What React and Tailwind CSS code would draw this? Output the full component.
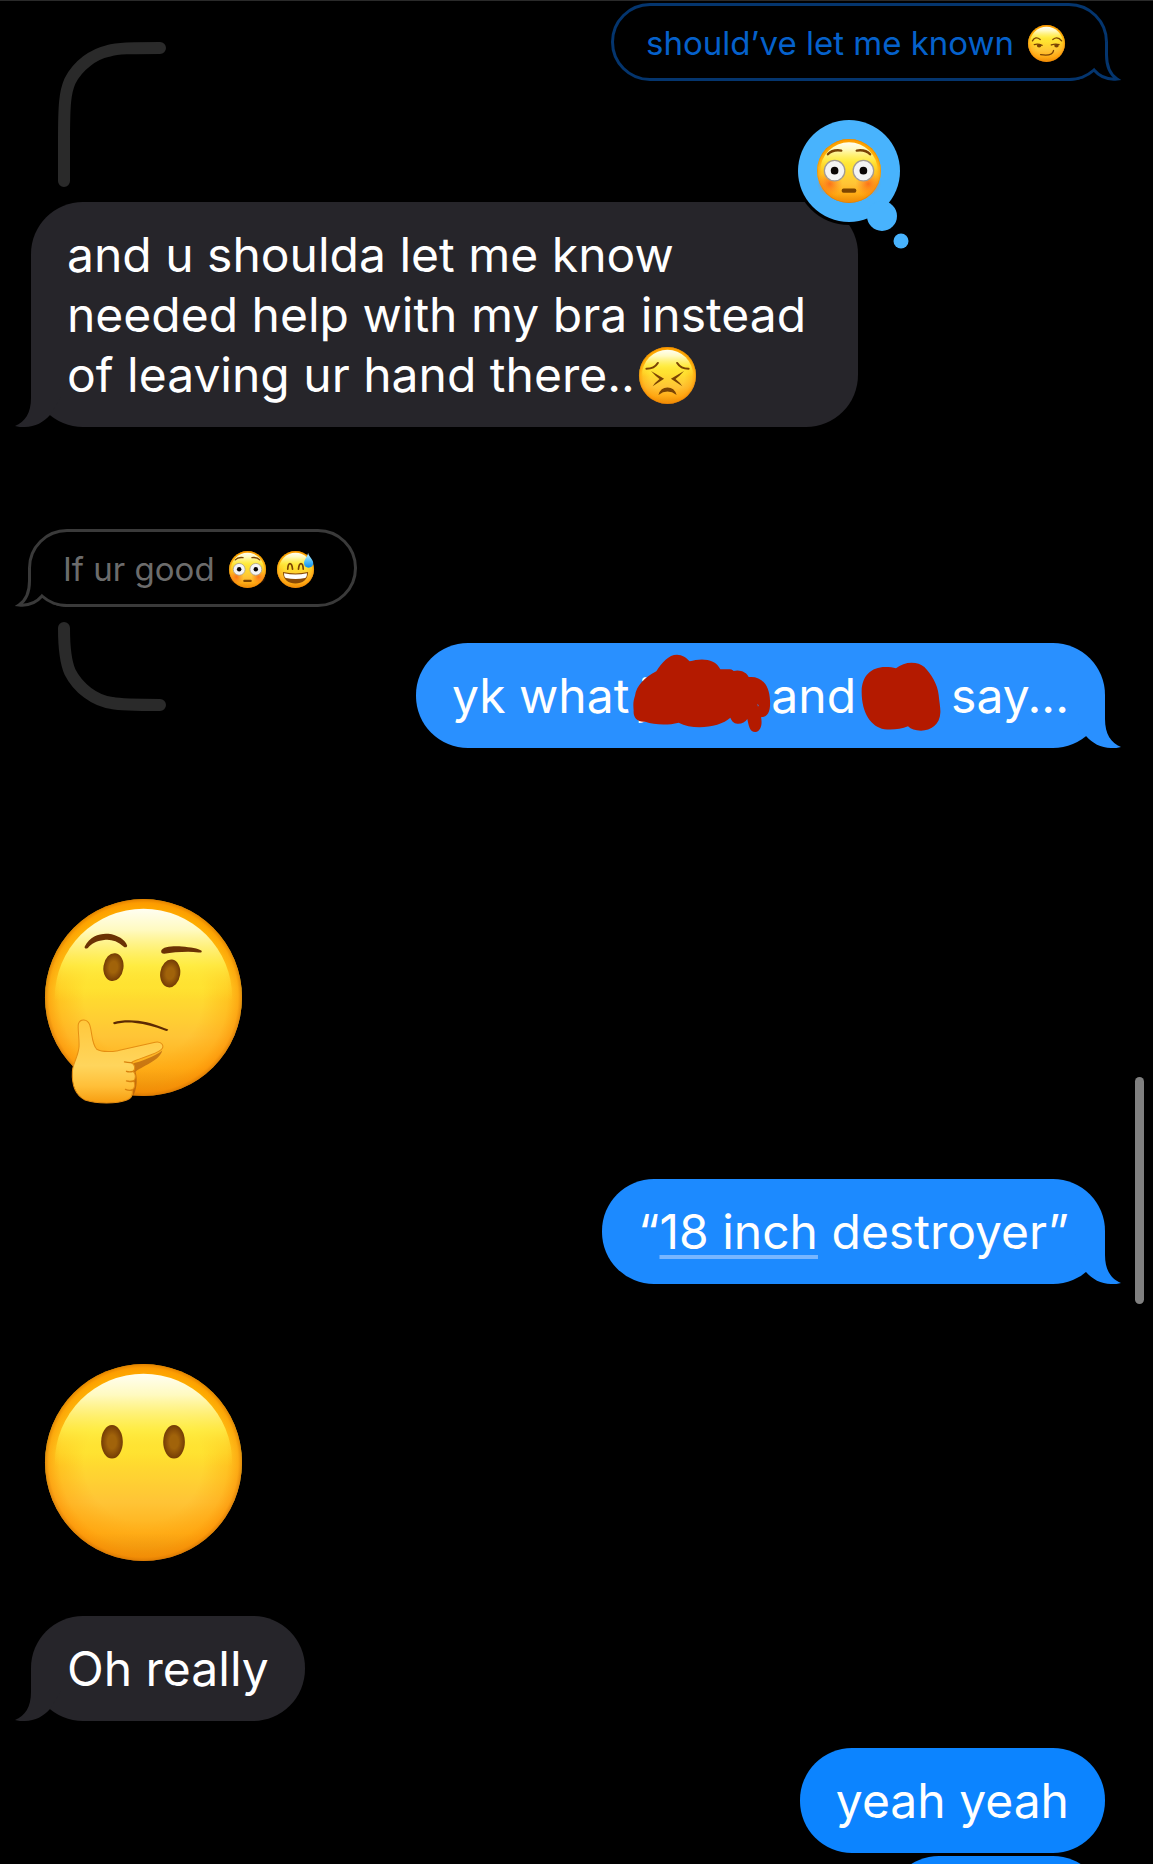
import React from 'react';

const EmojiDefs = () => (
  <svg className="absolute h-0 w-0" aria-hidden="true">
    <defs>
      <linearGradient id="face" x1="0" y1="0" x2="0" y2="1">
        <stop offset="0" stopColor="#ffae00" />
        <stop offset="0.12" stopColor="#ffc400" />
        <stop offset="0.45" stopColor="#ffe02e" />
        <stop offset="0.7" stopColor="#ffc436" />
        <stop offset="0.86" stopColor="#ffb01a" />
        <stop offset="1" stopColor="#e08a0e" />
      </linearGradient>
      <radialGradient id="rim">
        <stop offset="0.6" stopColor="#ff9500" stopOpacity="0" />
        <stop offset="0.85" stopColor="#ff9500" stopOpacity="0.3" />
        <stop offset="0.96" stopColor="#fb8c00" stopOpacity="0.6" />
        <stop offset="1" stopColor="#d87400" stopOpacity="0.8" />
      </radialGradient>
      <linearGradient id="shine" x1="0" y1="0" x2="0" y2="1">
        <stop offset="0" stopColor="#fffef2" />
        <stop offset="0.12" stopColor="#fffac0" />
        <stop offset="0.32" stopColor="#fff34e" stopOpacity="0.75" />
        <stop offset="0.52" stopColor="#ffe22e" stopOpacity="0" />
      </linearGradient>
      <radialGradient id="eye">
        <stop offset="0.4" stopColor="#a1630a" />
        <stop offset="1" stopColor="#743c05" />
      </radialGradient>
      <radialGradient id="blush">
        <stop offset="0" stopColor="#fb5a14" stopOpacity="0.75" />
        <stop offset="1" stopColor="#fb7a14" stopOpacity="0" />
      </radialGradient>
      <linearGradient id="hand" x1="0" y1="0" x2="0" y2="1">
        <stop offset="0" stopColor="#ffc83c" />
        <stop offset="0.55" stopColor="#ffd55c" />
        <stop offset="0.8" stopColor="#ffbf38" />
        <stop offset="1" stopColor="#f79d10" />
      </linearGradient>
      <linearGradient id="drop" x1="0" y1="0" x2="0" y2="1">
        <stop offset="0" stopColor="#d8f4ff" />
        <stop offset="0.5" stopColor="#5cc6fb" />
        <stop offset="1" stopColor="#0a8df0" />
      </linearGradient>
    </defs>
  </svg>
);

const Emoji = ({ label, className, children }) => (
  <svg viewBox="0 0 100 100" role="img" aria-label={label} className={`overflow-visible ${className}`}>
    <circle cx="50" cy="50" r="50" fill="url(#face)" />
    <circle cx="50" cy="50" r="50" fill="url(#rim)" />
    <ellipse cx="50" cy="50" rx="45" ry="45" fill="url(#shine)" />
    {children}
  </svg>
);

const Flushed = ({ className }) => (
  <Emoji label="flushed face" className={className}>
    <circle cx="20" cy="70" r="20" fill="url(#blush)" />
    <circle cx="80" cy="70" r="20" fill="url(#blush)" />
    <g fill="#f4f4f4" stroke="#a39b93" strokeWidth="2">
      <circle cx="27.5" cy="49.5" r="16" />
      <circle cx="72.5" cy="49.5" r="16" />
    </g>
    <circle cx="27.5" cy="49.5" r="6" fill="#0a0604" />
    <circle cx="72.5" cy="49.5" r="6" fill="#0a0604" />
    <path d="M17 24Q24 16 38 18M83 24Q76 16 62 18" fill="none" stroke="#7a4304" strokeWidth="3.6" strokeLinecap="round" />
    <rect x="38.5" y="77.5" width="23" height="6.5" rx="3" fill="#7d4500" />
  </Emoji>
);

const Smirk = ({ className }) => (
  <Emoji label="smirking face" className={className}>
    <g fill="none" stroke="#7a4304" strokeWidth="3.6" strokeLinecap="round">
      <path d="M12 43Q20 29 33 39M67 39Q80 29 91 43" />
      <path d="M17 53Q27 50 38 55M63 54Q74 50 84 53" />
      <path d="M34 80Q66 85 69 69" />
    </g>
    <ellipse cx="30" cy="56" rx="6" ry="4.5" fill="#7a4304" />
    <ellipse cx="77" cy="56" rx="6" ry="4.5" fill="#7a4304" />
  </Emoji>
);

const SweatGrin = ({ className }) => (
  <Emoji label="grinning face with sweat" className={className}>
    <path d="M29 49C30 29 40 29 42 49M58 49C60 29 70 29 71 49" fill="none" stroke="#7a4304" strokeWidth="4.5" strokeLinecap="round" />
    <path d="M16 57Q50 65 84 57C84 78 68 88 50 88C32 88 16 78 16 57Z" fill="#8a4a06" />
    <path d="M19 60Q50 67 81 60C81 68 79 71 76 73Q50 78 24 73C21 71 19 68 19 60Z" fill="#fff" />
    <path d="M84 5C86 16 98 23 98 33C98 40 92 45 85 45C78 45 73 40 73 33C73 23 82 17 84 5Z" fill="url(#drop)" />
  </Emoji>
);

const Persevere = ({ className }) => (
  <Emoji label="persevering face" className={className}>
    <path d="M13 38Q27 38 33 28M87 38Q73 38 67 28" fill="none" stroke="#7a4304" strokeWidth="3.6" strokeLinecap="round" />
    <path d="M21 42L44 55.5L24 69Q28 62 36 56Q29 51 21 42ZM79 42L56 55.5L76 69Q72 62 64 56Q71 51 79 42Z" fill="#7a4304" />
    <path d="M34 84Q38 71 50 71Q62 71 66 84Q58 78 50 78Q42 78 34 84Z" fill="#7a4304" />
  </Emoji>
);

const Thinking = ({ className }) => (
  <Emoji label="thinking face" className={className}>
    <g transform="scale(.1695) translate(-45 -58)">
      <ellipse cx="250" cy="262" rx="30" ry="42" fill="url(#eye)" transform="rotate(8 250 262)" />
      <ellipse cx="420" cy="281" rx="30" ry="42" fill="url(#eye)" transform="rotate(8 420 281)" />
      <path d="M164 200C180 168 210 160 235 162C262 165 285 180 291 197C291 204 284 204 280 200C262 184 240 178 222 181C198 184 184 192 174 204C168 209 162 206 164 200Z" fill="#6b3204" />
      <path d="M393 213C396 200 430 198 455 200C480 202 505 206 514 213C516 219 510 219 505 218C470 214 430 218 402 222C395 222 392 218 393 213Z" fill="#6b3204" />
      <path d="M250 427C280 418 320 420 350 427C375 433 400 443 414 449C412 455 408 453 402 451C375 440 345 432 315 429C290 427 270 429 254 433C249 433 249 429 250 427Z" fill="#5c2a03" />
      <path d="M305 552C330 545 375 530 396 512C390 540 345 555 316 575C324 600 318 635 308 648Z" fill="#a5520b" opacity=".6" />
      <path
        d="M127 575C128 550 145 530 147 500C148 470 142 445 145 432C150 416 172 416 179 435C187 460 184 490 200 508C220 519 245 515 265 512L375 487C395 483 405 500 392 510C375 525 325 535 303 548C316 554 316 568 309 574C318 582 317 598 310 603C317 612 314 624 306 630C309 645 303 655 290 660C260 672 200 672 165 660C135 645 125 610 127 575Z"
        fill="url(#hand)"
        stroke="#e58e12"
        strokeWidth="3"
      />
      <path d="M283 546Q296 549 306 548M289 574Q298 577 309 574M289 603Q299 606 310 603M286 628Q297 633 306 630" fill="none" stroke="#d9820e" strokeWidth="4" strokeLinecap="round" />
    </g>
  </Emoji>
);

const NoMouth = ({ className }) => (
  <Emoji label="face without mouth" className={className}>
    <ellipse cx="34" cy="39.5" rx="5.5" ry="8.5" fill="url(#eye)" />
    <ellipse cx="65.5" cy="39.5" rx="5.5" ry="8.5" fill="url(#eye)" />
  </Emoji>
);

const Tail = ({ sent }) => (
  <svg
    viewBox="-16 -55 46 55"
    className={`absolute bottom-0 h-[55px] w-[46px] fill-current ${sent ? '-right-4 -scale-x-100' : '-left-4'}`}
    aria-hidden="true"
  >
    <path d="M0 -53V-29C0 -14 -6 -5 -16 -1C-13 0 -10 0 -6 0C4 0 13 -5 19 -12L30 -30V-53Z" />
  </svg>
);

const Reaction = () => (
  <div className="absolute -top-[85px] -right-[53px] h-[134px] w-[116px]">
    <svg viewBox="0 0 116 134" className="absolute inset-0" aria-hidden="true">
      <circle cx="54" cy="54" r="54" fill="#000" />
      <g fill="#48b3fd">
        <circle cx="54" cy="54" r="51" />
        <circle cx="87" cy="99" r="15" />
        <circle cx="106" cy="124" r="7.5" />
      </g>
    </svg>
    <Flushed className="relative m-[22px] h-16 w-16" />
  </div>
);

// color is set through text-* so the tail can pick it up with currentColor
const Bubble = ({ sent, tail = true, reaction, color, children }) => (
  <div className={`relative ${color} ${sent ? 'self-end' : 'max-w-[77%] self-start'}`}>
    <div className="rounded-[52px] bg-current px-9 pt-[23px] pb-[22px]">
      <p className="text-[48px] leading-[60px] text-white">{children}</p>
    </div>
    {tail && <Tail sent={sent} />}
    {reaction && <Reaction />}
  </div>
);

const GhostBubble = ({ sent, className, children }) => (
  <div
    className={`relative rounded-full border-[3px] pt-4 pr-10 pb-[14px] pl-8 text-[33px] leading-[42px] ${
      sent ? '-mr-[3px] border-[#04356e] text-[#0561cb]' : '-ml-[3px] self-start border-[#3a3a3a] text-[#6c6c6c]'
    } ${className || ''}`}
  >
    <svg
      viewBox="-14 -42 54 42"
      className={`absolute -bottom-[3px] h-[42px] w-[54px] ${
        sent ? '-right-[17px] -scale-x-100 stroke-[#04356e]' : '-left-[17px] stroke-[#3a3a3a]'
      }`}
      aria-hidden="true"
    >
      <path d="M1 -39L39 -39V-3L1 -3Z" fill="#000" stroke="none" />
      <path
        d="M1.5 -39.5V-26C1.5 -14 -3 -6 -9 -2C1 -1 8 -4 14 -11A37.5 37.5 0 0 0 40 -1.5"
        fill="#000"
        strokeWidth="3"
      />
    </svg>
    <p className="relative flex items-center">{children}</p>
  </div>
);

const ThreadLine = ({ bottom }) =>
  bottom ? (
    <svg viewBox="58 622 108 89" className="ml-[27px] h-[89px] w-[108px]" aria-hidden="true">
      <path d="M64 628C64 650 66 663 70 672C78 688 95 701 112 703C122 705 135 705 160 705" fill="none" stroke="#2a2a2a" strokeWidth="12" strokeLinecap="round" />
    </svg>
  ) : (
    <svg viewBox="58 42 108 145" className="mt-[39px] ml-[27px] h-[145px] w-[108px]" aria-hidden="true">
      <path d="M64 181V140C64 105 65 92 70 81C78 65 94 54 108 51C118 48 130 48 160 48" fill="none" stroke="#2a2a2a" strokeWidth="12" strokeLinecap="round" />
    </svg>
  );

export default function App() {
  return (
    <main className="relative flex h-screen flex-col overflow-hidden border-t border-[#2a2a2a] bg-black pt-[2px] pr-12 pl-[31px] font-['Inter',sans-serif]">
      <EmojiDefs />

      {/* Replied-to messages are outlined, with the thread line on the left */}
      <div className="flex shrink-0 items-start justify-between">
        <ThreadLine />
        <GhostBubble sent>
          should’ve let me known
          <Smirk className="ml-[14px] h-[37px] w-[37px]" />
        </GhostBubble>
      </div>

      <div className="mt-[15px] flex shrink-0 flex-col">
        <Bubble reaction color="text-[#26252a]">
          and u shoulda let me know needed help with my bra instead of leaving ur hand there..
          <Persevere className="-mt-[6px] ml-1 inline-block h-[57px] w-[57px]" />
        </Bubble>
      </div>

      <GhostBubble className="mt-[102px] shrink-0">
        If ur good
        <Flushed className="ml-[14px] h-[37px] w-[37px]" />
        <SweatGrin className="ml-[11px] h-[37px] w-[37px]" />
      </GhostBubble>

      <div className="mt-[15px] flex shrink-0 items-start justify-between">
        <ThreadLine bottom />
        <div className="mt-[21px] flex">
          <Bubble sent color="text-[#2990ff]">
            yk what
            <span className="relative ml-1 inline-block w-[138px] pl-[6px]">
              j
              <svg viewBox="698 100 414 237" className="absolute -top-3 left-0 h-[79px] w-[138px]" aria-hidden="true">
                <path
                  d="M704 225C708 195 735 168 768 152C785 125 805 102 830 102C845 102 860 112 868 122C900 112 945 112 960 146C980 146 995 143 1000 151C1018 145 1040 155 1045 169C1085 165 1108 195 1109 240C1111 270 1103 290 1082 290C1086 305 1084 332 1065 334C1048 334 1045 315 1041 295C1030 312 1000 318 990 291C960 320 880 330 835 306C800 315 760 312 735 303C710 305 698 290 700 270C698 250 699 240 704 225Z"
                  fill="#b41a00"
                />
                <path d="M1071 249L1075 254L1073 258Z" fill="#2990ff" />
              </svg>
            </span>
            and
            <span className="relative mr-[10px] ml-[5px] inline-block w-20">
              &nbsp;
              <svg viewBox="245 123 240 207" className="absolute -top-1 left-0 h-[69px] w-20" aria-hidden="true">
                <path
                  d="M247 210C248 165 275 138 318 138C330 138 342 139 350 142C375 120 415 120 435 138C455 158 475 190 478 222C480 245 484 262 483 275C482 310 455 328 425 329C408 329 395 325 386 316C365 325 340 327 315 325C275 318 246 275 247 210Z"
                  fill="#b41a00"
                />
              </svg>
            </span>
            say...
          </Bubble>
        </div>
      </div>

      <Thinking className="mt-[151px] ml-[14px] h-[197px] w-[197px] shrink-0" />

      <div className="mt-[83px] flex shrink-0 flex-col">
        <Bubble sent color="text-[#1c8aff]">
          “
          <a href="#convert" className="underline decoration-[#78b6ff] decoration-4 underline-offset-[6px] [text-decoration-skip-ink:none]">
            18 inch
          </a>{' '}
          destroyer”
        </Bubble>
      </div>

      <NoMouth className="mt-20 ml-[14px] h-[197px] w-[197px] shrink-0" />

      <div className="mt-[55px] flex shrink-0 flex-col">
        <Bubble color="text-[#26252a]">Oh really</Bubble>
      </div>

      <div className="mt-[27px] flex shrink-0 flex-col gap-[3px]">
        <Bubble sent tail={false} color="text-[#0c84ff]">
          yeah yeah
        </Bubble>
        <div className="h-[105px] w-[218px] self-end rounded-[52px] bg-[#0c84ff]" />
      </div>

      {/* Scroll indicator */}
      <div className="absolute top-[1076px] right-[9px] h-[227px] w-[9px] rounded-full bg-[#808080]" />
    </main>
  );
}
